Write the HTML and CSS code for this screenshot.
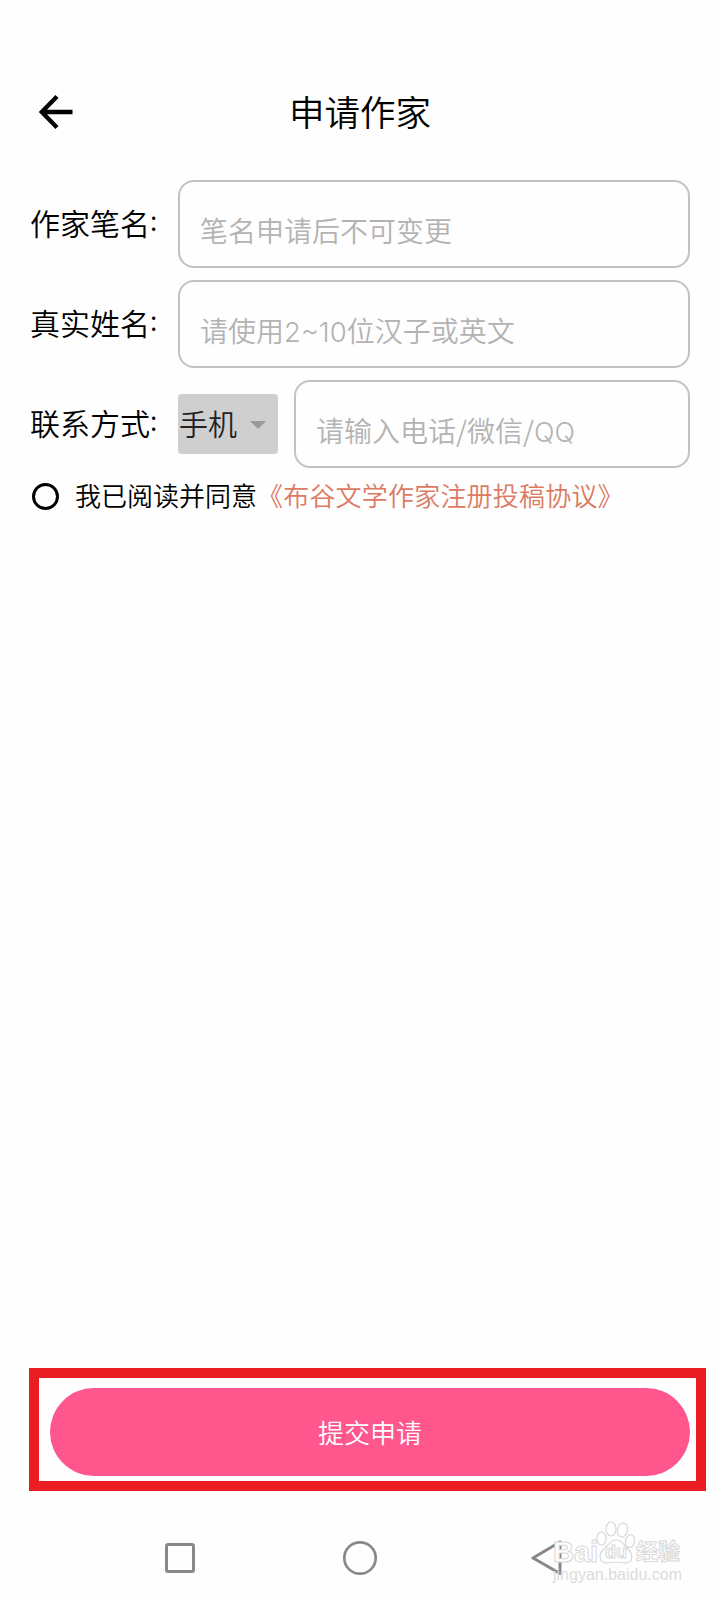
FILE: index.html
```html
<!DOCTYPE html>
<html lang="zh-CN">
<head>
<meta charset="utf-8">
<title>申请作家</title>
<link rel="stylesheet" href="styles.css">
</head>
<body>
<div class="screen">
  <header class="topbar">
    <svg class="back" width="34" height="34" viewBox="0 0 34 34"><path d="M18 1.500 2.800 17 18 32.500M2.800 17H33.500" fill="none" stroke="#000" stroke-width="4.300"/></svg>
    <h1 class="title">申请作家</h1>
  </header>
  <main class="form">
    <div class="row"><span class="label">作家笔名<span class="colon">:</span></span><div class="field">笔名申请后不可变更</div></div>
    <div class="row"><span class="label">真实姓名<span class="colon">:</span></span><div class="field">请使用<span class="digits">2~10</span>位汉子或英文</div></div>
    <div class="row"><span class="label">联系方式<span class="colon">:</span></span>
      <div class="select"><span>手机</span><svg class="caret" width="16" height="8" viewBox="0 0 16 8"><path d="M0 0H16L8 8Z" fill="#999"/></svg></div>
      <div class="field">请输入电话/微信/<span class="latin">QQ</span></div>
    </div>
    <div class="agree"><span class="radio"></span><span>我已阅读并同意</span><span class="link">《布谷文学作家注册投稿协议》</span></div>
  </main>
  <div class="highlight"><div class="submit">提交申请</div></div>
  <nav class="navbar">
    <svg width="36" height="40" viewBox="0 0 36 40"><rect x="4.500" y="6.500" width="27" height="27" rx="1.500" fill="none" stroke="#888" stroke-width="3"/></svg>
    <svg width="36" height="40" viewBox="0 0 36 40"><circle cx="18" cy="20" r="15.700" fill="none" stroke="#888" stroke-width="2.700"/></svg>
    <svg width="36" height="40" viewBox="0 0 36 40"><path d="M2 20 29 4V35.500Z" fill="none" stroke="#888" stroke-width="3" stroke-linejoin="round"/></svg>
  </nav>
  <div class="watermark">
    <div class="brand">
      <span class="bai">Bai</span>
      <div class="paw">
        <svg width="40" height="44" viewBox="0 0 40 44"><g fill="#fff" stroke="#d8d8d8" stroke-width="1.200"><ellipse cx="5.500" cy="17.500" rx="4.700" ry="6.500"/><ellipse cx="15" cy="8" rx="5" ry="7"/><ellipse cx="26.500" cy="9" rx="5" ry="7" transform="rotate(12 26.500 9)"/><ellipse cx="34" cy="20" rx="4.500" ry="6.500" transform="rotate(12 34 20)"/><path d="M20 19C14 19 13 24 9 27C4 31 3 35 5 39C8 44 14 41 20 41C26 41 32 44 35 39C37 34 35 31 31 27C27 23 26 19 20 19Z"/></g></svg>
        <span class="du">du</span>
      </div>
      <span class="exp">经验</span>
    </div>
    <span class="url">jingyan.baidu.com</span>
  </div>
</div>
</body>
</html>
```
FILE: styles.css
```css
* { box-sizing: border-box; }
body { margin: 0; background: #fefefe; font-family: "Noto Sans CJK SC", sans-serif; font-weight: 350; color: #000; }
.screen { position: relative; width: 720px; height: 1600px; overflow: hidden; display: flex; flex-direction: column; }
.topbar { height: 180px; padding: 91px 0 0 39px; display: flex; align-items: flex-start; }
.back { margin-top: 4px; }
.title { margin: 0 0 0 216px; font-size: 35.5px; line-height: 40px; font-weight: 350; white-space: nowrap; }
.form { flex: 1; padding: 0 30px; display: flex; flex-direction: column; gap: 12px; }
.row { height: 88px; display: flex; align-items: center; }
.label { width: 148px; flex: none; padding-bottom: 4px; font-size: 30px; line-height: 40px; display: flex; }
.colon { margin-top: -2px; font-size: 27px; }
.field { flex: 1; height: 88px; padding: 11px 0 0 20px; border: 2px solid #c2c2c2; border-radius: 16px; font-size: 28px; line-height: 74px; color: #b3b3b3; white-space: nowrap; }
.digits { font-family: Inter, sans-serif; font-size: 27.5px; }
.latin { font-family: Inter, sans-serif; font-size: 27px; }
.select { width: 100px; height: 60px; margin-right: 16px; padding: 0 0 2px 1px; flex: none; display: flex; align-items: center; background: #cfcfcf; border-radius: 4px; font-size: 29px; line-height: 40px; color: #222; }
.caret { margin: 3px 0 0 13px; }
.agree { height: 32px; display: flex; align-items: center; font-size: 26px; line-height: 32px; padding-bottom: 2px; white-space: nowrap; }
.radio { width: 27px; height: 27px; margin: 2px 16px 0 2px; flex: none; border: 3px solid #000; border-radius: 50%; }
.link { color: #dc7a63; letter-spacing: 0.2px; }
.highlight { width: 677px; height: 123px; margin-left: 29px; padding: 10px 6px 0 11px; border: 10px solid #ea1c24; flex: none; }
.submit { height: 88px; border-radius: 44px; background: #ff568e; color: #fff; font-size: 26px; line-height: 87px; text-align: center; }
.navbar { height: 109px; padding: 47px 0 0 162px; display: flex; gap: 144px; flex: none; }
.navbar svg:last-child { margin-left: 9px; }
.watermark { position: absolute; left: 553px; top: 1521px; width: 130px; color: #fff; font-family: "Liberation Sans", "Noto Sans CJK SC", sans-serif; font-weight: 700; -webkit-text-stroke: 1px #d8d8d8; }
.brand { display: flex; height: 44px; align-items: flex-end; }
.bai { width: 43px; font-size: 29px; line-height: 26px; letter-spacing: 0; }
.paw { position: relative; width: 40px; height: 44px; flex: none; }
.du { position: absolute; left: 9px; top: 22px; font-size: 18px; line-height: 18px; }
.exp { font-size: 22px; line-height: 26px; white-space: nowrap; }
.url { display: block; margin-top: 1px; font-size: 16px; line-height: 18px; font-weight: 400; color: #dcdcdc; -webkit-text-stroke: 0; white-space: nowrap; }
```
